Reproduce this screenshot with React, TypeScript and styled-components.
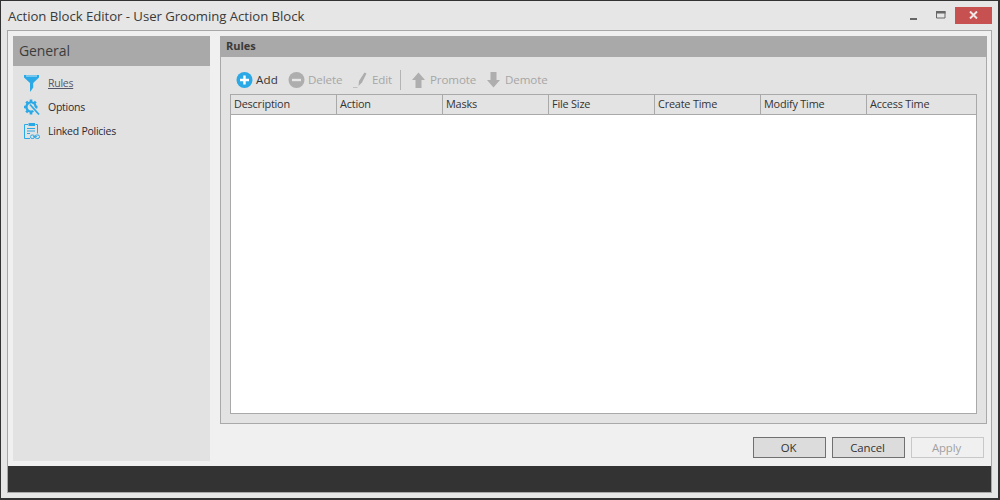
import React from "react";
import styled, { createGlobalStyle } from "styled-components";

const Global = createGlobalStyle`
  html, body { margin: 0; padding: 0; background: #e6e6e6; }
  body { font-family: "Open Sans", "Noto Sans", sans-serif; }
`;

const Win = styled.div`
  width: 1000px; height: 500px; box-sizing: border-box;
  border: 1px solid #333; border-bottom-width: 2px; border-right-width: 2px;
  background: #e6e6e6; padding: 0 6px 5px 6px;
  display: flex; flex-direction: column;
`;
const TitleBar = styled.div`
  height: 29px; flex: none; display: flex; align-items: center; justify-content: space-between;
`;
const Title = styled.div`
  font-size: 13.2px; color: #3a3a3a; padding-left: 1px; letter-spacing: -0.05px; margin-top: 1px;
`;
const WinControls = styled.div`
  display: flex; align-items: center; margin-top: -1px; margin-right: 0;
`;
const CtrlIcon = styled.svg`
  display: block; width: 10px; height: 8px; flex: none;
`;
const MinSlot = styled.div`
  width: 26px; display: flex; justify-content: flex-start; padding-top: 3px;
`;
const MaxSlot = styled.div`
  width: 19px; display: flex;
`;
const CloseBtn = styled.div`
  width: 37px; height: 17px; background: #c75050; display: flex; align-items: center; justify-content: center;
`;
const Frame = styled.div`
  flex: 1; min-height: 0; border: 1px solid #a8a8a8; background: #f0f0f0;
  display: flex; flex-direction: column;
`;
const Body = styled.div`
  flex: 1; min-height: 0; display: flex; gap: 10px; padding: 5px 4px 5px 5px;
`;
const Sidebar = styled.aside`
  width: 197px; flex: none; background: #e2e2e2;
`;
const SideHead = styled.div`
  height: 30px; background: #a9a9a9; color: #3c3c3c; font-size: 14px; display: flex; align-items: center; padding: 0 0 2px 6px; box-sizing: border-box; letter-spacing: -0.1px;
`;
const SideList = styled.nav`
  display: flex; flex-direction: column; padding: 5px 0 0 10px;
`;
const SideItem = styled.div<{ $link?: boolean }>`
  height: 24px; display: flex; align-items: center; gap: 8px; font-size: 10.5px; letter-spacing: -0.25px;
  color: ${p => (p.$link ? "#56566a" : "#2a2a35")};
  text-decoration: ${p => (p.$link ? "underline" : "none")};
`;
const SideLabel = styled.span`
  display: block;
`;
const SideIcon = styled.svg`
  width: 17px; height: 18px; flex: none; display: block;
`;
const MainCol = styled.div`
  flex: 1; min-width: 0; display: flex; flex-direction: column;
`;
const Panel = styled.section`
  height: 388px; flex: none; box-sizing: border-box; background: #e3e3e3; border: 1px solid #a9a9a9; border-top: none; display: flex; flex-direction: column;
`;
const PanelHead = styled.div`
  height: 21px; flex: none; box-sizing: border-box; background: #a9a9a9; margin: 0 -1px; padding: 0 0 2px 6px; display: flex; align-items: center;
  font-size: 11px; font-weight: 700; color: #3a3a3a; letter-spacing: -0.05px;
`;
const Toolbar = styled.div`
  height: 37px; flex: none; display: flex; align-items: center; padding: 9px 0 0 15px; box-sizing: border-box;
`;
const Tool = styled.div<{ $off?: boolean; $w: number }>`
  width: ${p => p.$w}px; flex: none; display: flex; align-items: center; gap: 3px; font-size: 11.6px; letter-spacing: ${p => (p.$off ? "-0.12px" : "0.2px")};
  color: ${p => (p.$off ? "#a6a6a6" : "#333")};
`;
const ToolLabel = styled.span`
  display: block; margin-top: -2px;
`;
const ToolIcon = styled.svg`
  width: 17px; height: 18px; flex: none; display: block;
`;
const ToolSep = styled.div`
  width: 1px; height: 20px; background: #b4b4b4; margin-right: 9px; flex: none;
`;
const Grid = styled.div`
  height: 320px; margin: 0 9px; flex: none; box-sizing: border-box; border: 1px solid #a9a9a9; background: #fff;
`;
const GridHead = styled.div`
  height: 20px; box-sizing: border-box; background: #e3e3e3; border-bottom: 1px solid #a9a9a9; display: grid; grid-template-columns: repeat(7, 106px);
`;
const Col = styled.div`
  box-sizing: border-box; border-right: 1px solid #a9a9a9; padding-left: 3px; font-size: 10.9px; line-height: 18px; color: #333; letter-spacing: -0.2px;
  &:last-child { border-right: none; }
`;
const Actions = styled.div`
  display: flex; justify-content: flex-end; gap: 6px; padding: 13px 3px 0 0;
`;
const Btn = styled.div<{ $off?: boolean }>`
  width: 73px; height: 21px; box-sizing: border-box; display: flex; align-items: center; justify-content: center; font-size: 11.4px; letter-spacing: -0.1px; padding-right: 2px;
  border: 1px solid ${p => (p.$off ? "#c8c8c8" : "#707070")};
  background: ${p => (p.$off ? "#f0f0f0" : "#dcdcdc")};
  color: ${p => (p.$off ? "#a0a0a0" : "#333")};
`;
const Footer = styled.div`
  height: 26px; flex: none; background: #333;
`;

const blue = "#2aa9e6";

export default function App() {
  return (
    <>
      <Global />
      <Win>
        <TitleBar>
          <Title>Action Block Editor - User Grooming Action Block</Title>
          <WinControls>
            <MinSlot>
              <CtrlIcon viewBox="0 0 10 8"><rect x="0" y="5" width="7" height="2" fill="#666" /></CtrlIcon>
            </MinSlot>
            <MaxSlot>
              <CtrlIcon viewBox="0 0 10 8"><path d="M.5.5h8.5v6.5H.5z" fill="none" stroke="#666" /><rect x="0" y="0" width="9.5" height="2.5" fill="#666" /></CtrlIcon>
            </MaxSlot>
            <CloseBtn>
              <svg width="9" height="8" viewBox="0 0 9 8"><path d="M1 .5l7 7M8 .5l-7 7" stroke="#f2e6e6" strokeWidth="2" /></svg>
            </CloseBtn>
          </WinControls>
        </TitleBar>
        <Frame>
          <Body>
            <Sidebar>
              <SideHead>General</SideHead>
              <SideList>
                <SideItem $link>
                  <SideIcon viewBox="0 0 17 18"><path d="M1 1h15v2.5L10.2 9v4.5L7.5 17.5H7V9L1 3.5z" fill={blue} /><path d="M3 2h11" stroke="#bfe6f8" strokeWidth="1" /></SideIcon>
                  <SideLabel>Rules</SideLabel>
                </SideItem>
                <SideItem>
                  <SideIcon viewBox="0 0 17 18">
                    <path d="M8 1.5v2.5M3.2 3.6l2 2M1 9h2.6M3.2 14.4l2-2M8 16.5v-2.4M12.8 3.6l-2 2M14.5 9h-2.2" stroke={blue} strokeWidth="2.6" />
                    <circle cx="8" cy="9" r="4.6" fill="none" stroke={blue} strokeWidth="2.4" />
                    <path d="M7 6.5l9 10" stroke="#e2e2e2" strokeWidth="3.4" />
                    <path d="M7 6.5l9 10" stroke={blue} strokeWidth="1.8" />
                  </SideIcon>
                  <SideLabel>Options</SideLabel>
                </SideItem>
                <SideItem>
                  <SideIcon viewBox="0 0 17 18">
                    <path d="M12.5 2.5h2v9M5 2.5H1.5v14H7" fill="none" stroke={blue} strokeWidth="1" />
                    <rect x="5.5" y="1" width="6.5" height="3" fill={blue} />
                    <path d="M4 6.5h8M4 9h8M4 11.5h3" stroke={blue} strokeWidth="1" />
                    <rect x="7.5" y="13" width="4" height="3.5" rx="1.6" fill="none" stroke={blue} strokeWidth="1" />
                    <rect x="12" y="13" width="4.5" height="3.5" rx="1.6" fill="none" stroke={blue} strokeWidth="1" />
                    <path d="M10 14.7h4" stroke={blue} strokeWidth="1" />
                  </SideIcon>
                  <SideLabel>Linked Policies</SideLabel>
                </SideItem>
              </SideList>
            </Sidebar>
            <MainCol>
              <Panel>
                <PanelHead>Rules</PanelHead>
                <Toolbar>
                  <Tool $w={52}>
                    <ToolIcon viewBox="0 0 17 18"><circle cx="8.5" cy="9" r="8" fill={blue} /><path d="M8.5 4.5v9M4 9h9" stroke="#fff" strokeWidth="2.4" /></ToolIcon>
                    <ToolLabel>Add</ToolLabel>
                  </Tool>
                  <Tool $off $w={64}>
                    <ToolIcon viewBox="0 0 17 18"><circle cx="8.5" cy="9" r="8" fill="#aeaeae" /><path d="M4 9h9" stroke="#e6e6e6" strokeWidth="2.4" /></ToolIcon>
                    <ToolLabel>Delete</ToolLabel>
                  </Tool>
                  <Tool $off $w={48}>
                    <ToolIcon viewBox="0 0 17 18"><path d="M12.5 1.5l2 1-4.5 9-3.5 3.5.5-5z" fill="#adadad" /><path d="M1 16.5h4.5" stroke="#c0c0c0" /></ToolIcon>
                    <ToolLabel>Edit</ToolLabel>
                  </Tool>
                  <ToolSep />
                  <Tool $off $w={75}>
                    <ToolIcon viewBox="0 0 17 18"><path d="M8.5 1.5L15 9h-3.5v8h-6V9H2z" fill="#aeaeae" /></ToolIcon>
                    <ToolLabel>Promote</ToolLabel>
                  </Tool>
                  <Tool $off $w={70}>
                    <ToolIcon viewBox="0 0 17 18"><path d="M5.5 1h6v8H15l-6.5 7.5L2 9h3.5z" fill="#aeaeae" /></ToolIcon>
                    <ToolLabel>Demote</ToolLabel>
                  </Tool>
                </Toolbar>
                <Grid>
                  <GridHead>
                    <Col>Description</Col>
                    <Col>Action</Col>
                    <Col>Masks</Col>
                    <Col>File Size</Col>
                    <Col>Create Time</Col>
                    <Col>Modify Time</Col>
                    <Col>Access Time</Col>
                  </GridHead>
                </Grid>
              </Panel>
              <Actions>
                <Btn>OK</Btn>
                <Btn>Cancel</Btn>
                <Btn $off>Apply</Btn>
              </Actions>
            </MainCol>
          </Body>
          <Footer />
        </Frame>
      </Win>
    </>
  );
}
